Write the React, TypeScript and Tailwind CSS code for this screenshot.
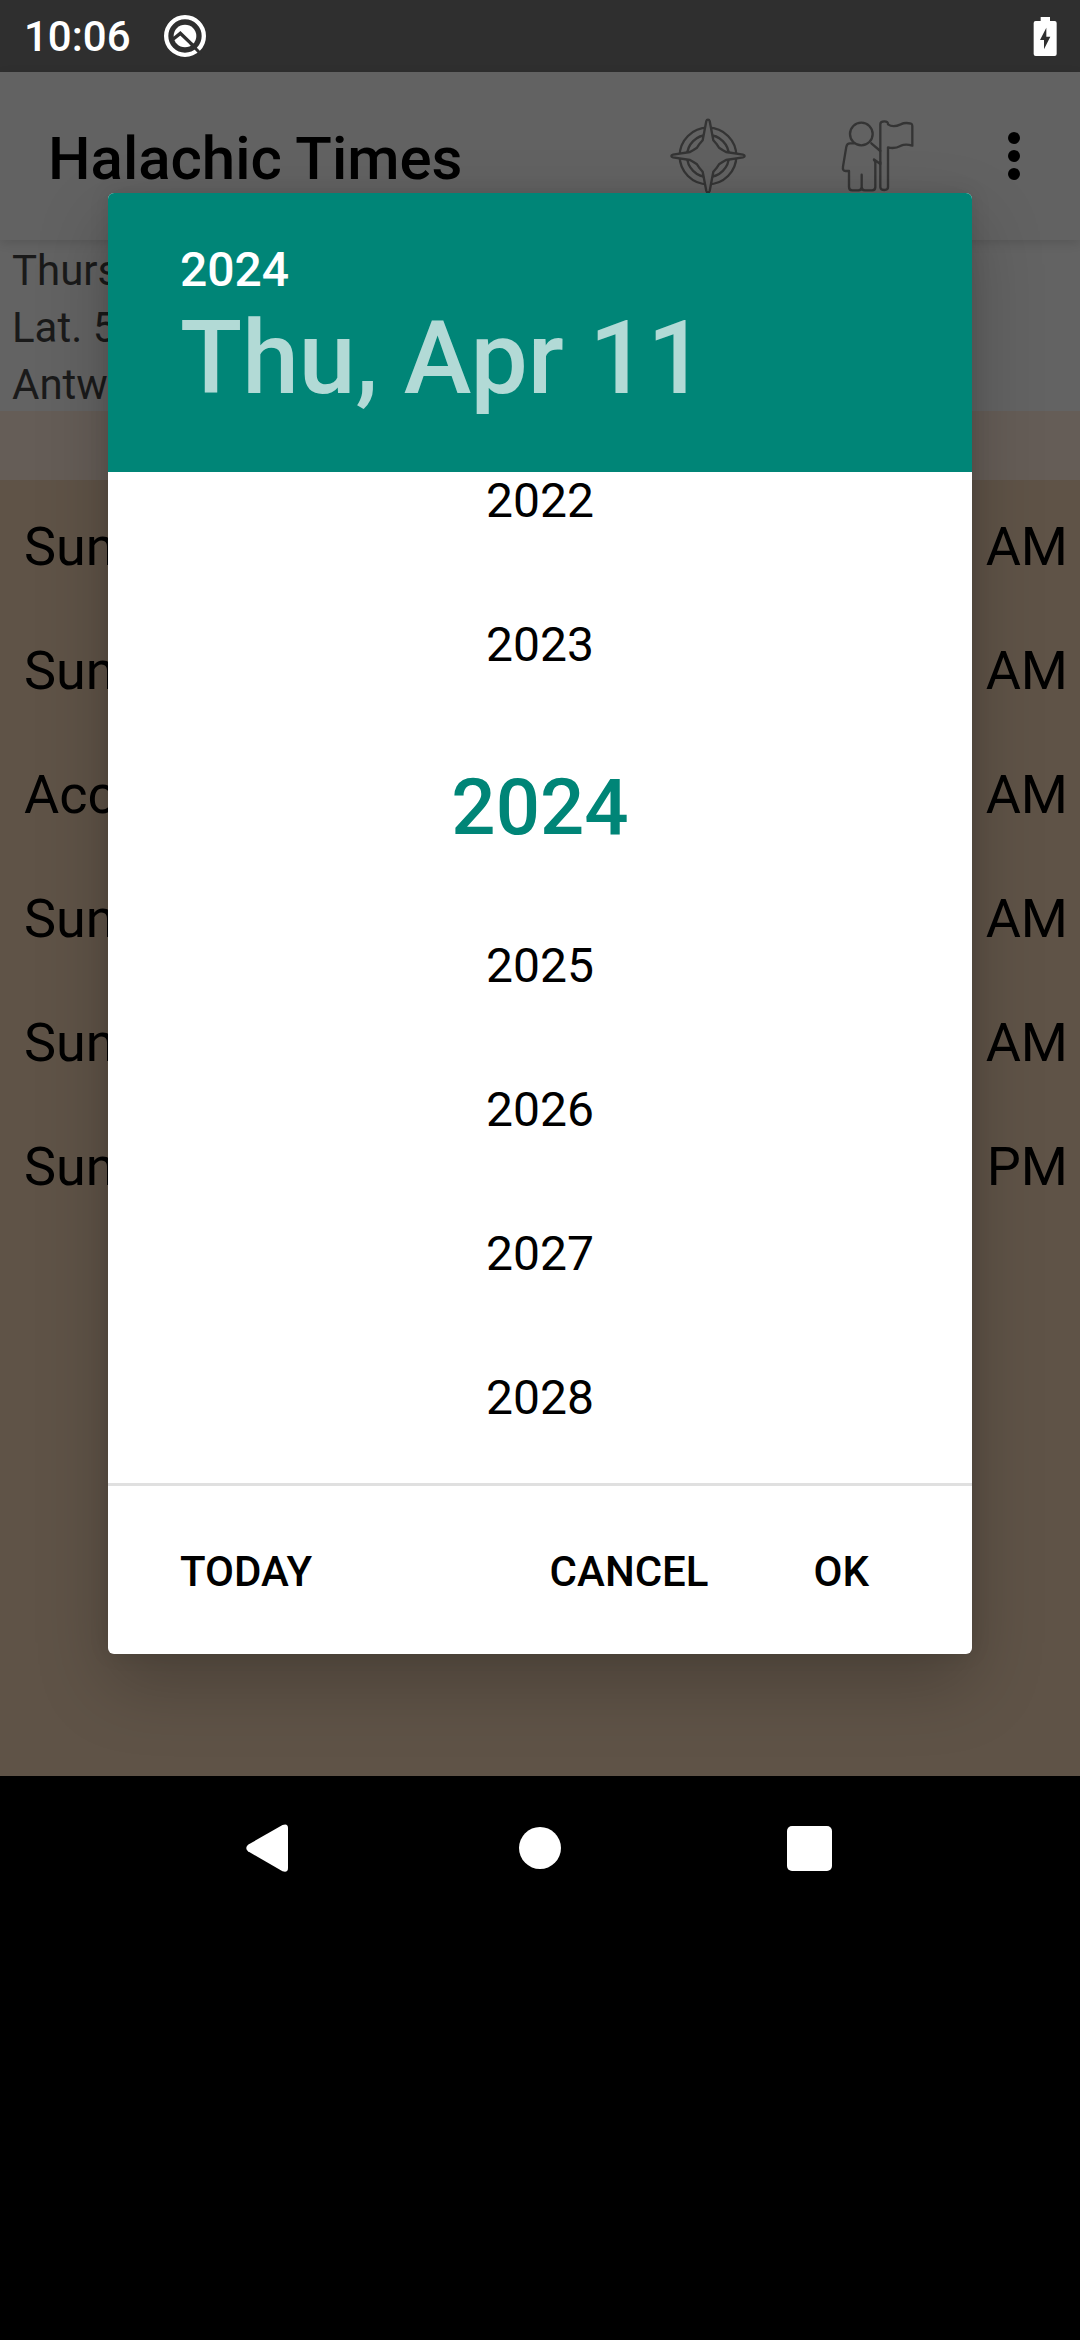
import React from "react";

const rows = [
  { label: "Sun", suffix: "AM" },
  { label: "Sun", suffix: "AM" },
  { label: "Acc", suffix: "AM" },
  { label: "Sun", suffix: "AM" },
  { label: "Sun", suffix: "AM" },
  { label: "Sun", suffix: "PM" },
];

const years = [2022, 2023, 2024, 2025, 2026, 2027, 2028];

function DebugIcon() {
  return (
    <svg className="block h-[44px] w-[44px]" viewBox="39 41 132 132" fill="none">
      <circle cx="105" cy="107" r="56.5" stroke="#fff" strokeWidth="13" />
      <circle cx="105" cy="107" r="34" fill="#fff" />
      <path d="M70 116 L91 99 L136 142" stroke="#2f2f2f" strokeWidth="10" />
      <path d="M122 129 L153 162" stroke="#2f2f2f" strokeWidth="9" />
    </svg>
  );
}

function BatteryIcon() {
  return (
    <svg className="block h-[39px] w-6" viewBox="97 48 72 117">
      <path
        d="M120 48h28v12h14q6 0 6 6v93q0 6-6 6h-57q-6 0-6-6V66q0-6 6-6h15z"
        fill="#fff"
      />
      <path d="M137 80v27h12l-19 38v-28h-12z" fill="#2f2f2f" />
    </svg>
  );
}

function CompassIcon() {
  return (
    <svg
      className="block h-[78px] w-[78px]"
      viewBox="87 172 234 234"
      fill="none"
      stroke="#343434"
      strokeWidth="7"
      strokeLinejoin="round"
    >
      <circle cx="204" cy="289" r="85" />
      <circle cx="204" cy="289" r="63" />
      <path
        d="M199 184q1-4 5-4t5 4l11 58 9 10 8 12 12 8 9 5 51 8q5 1 5 4t-5 4l-51 8-9 5-12 8-8 12-9 10-11 58q-1 4-5 4t-5-4l-11-58-9-10-8-12-12-8-9-5-51-8q-5-1-5-4t5-4l51-8 9-5 12-8 8-12 9-10z"
        fill="#606060"
      />
    </svg>
  );
}

function GuideIcon() {
  return (
    <svg
      className="block h-[72px] w-[73px]"
      viewBox="602 180 219 216"
      fill="none"
      stroke="#343434"
      strokeWidth="7"
      strokeLinejoin="round"
      strokeLinecap="round"
    >
      <circle cx="663" cy="222" r="34" />
      <path d="M641 250h-12q-9 0-11 10l-10 60q-2 13 8 13h10v48q0 10 10 10h18q10 0 10-10v-37 37q0 10 10 10h21q10 0 10-10v-73q0-5-4-8v-2l19 14v-39l-27-23" />
      <path d="M720 272v-80q0-8 12-8t11 9c10 7 25 6 38 0 12-6 20-5 31-2q4 1 4 7v59c-14-4-22-5-34 0-13 7-26 9-39 5v120q0 8-11 8t-12-8v-75" />
    </svg>
  );
}

function StatusBar() {
  return (
    <div className="flex h-[72px] items-center bg-[#2f2f2f] pl-6 pr-[23px] text-white">
      <span className="pt-[2px] text-[42px] font-medium leading-[50px]">10:06</span>
      <div className="ml-auto flex w-[894px] items-center justify-between">
        <DebugIcon />
        <BatteryIcon />
      </div>
    </div>
  );
}

function Toolbar() {
  return (
    <div className="relative flex h-[168px] items-center bg-[#626262] pl-12 shadow-[0_3px_10px_rgba(0,0,0,0.12)]">
      <h1 className="pt-[5px] text-[60px] font-medium leading-[70px] text-black">Halachic Times</h1>
      <div className="ml-auto flex w-[411px] items-center">
        <CompassIcon />
        <div className="ml-[94px]">
          <GuideIcon />
        </div>
        <div className="ml-[94px] flex flex-col gap-[6px]">
          <span className="h-3 w-3 rounded-full bg-black" />
          <span className="h-3 w-3 rounded-full bg-black" />
          <span className="h-3 w-3 rounded-full bg-black" />
        </div>
      </div>
    </div>
  );
}

function YearList() {
  return (
    <div className="h-[1011px] overflow-hidden bg-white">
      <ul className="-mt-[43px] flex flex-col text-center">
        {years.map((y) =>
          y === 2024 ? (
            <li key={y} className="h-[177px] text-[78px] font-medium leading-[181px] text-[#008577]">
              {y}
            </li>
          ) : (
            <li key={y} className="h-[144px] text-[48px] leading-[144px] text-black">
              {y}
            </li>
          ),
        )}
      </ul>
    </div>
  );
}

function DatePickerDialog() {
  return (
    <div className="absolute left-[108px] top-[193px] flex h-[1461px] w-[864px] flex-col overflow-hidden rounded-[6px] bg-white shadow-[0_30px_72px_rgba(0,0,0,0.22),0_0_20px_rgba(0,0,0,0.1)]">
      <div className="h-[279px] bg-[#008577] px-[72px] pt-[49px]">
        <div className="text-[48px] font-medium leading-[56px] text-white">2024</div>
        <div className="text-[102px] font-medium leading-[120px] text-[#b2dad6]">Thu, Apr 11</div>
      </div>
      <YearList />
      <div className="h-[3px] bg-[#e0e0e0]" />
      <div className="flex flex-1 items-center pl-[72px] pr-[103px] pt-[4px] text-[42px] font-medium leading-[50px] text-black">
        <button>TODAY</button>
        <button className="ml-auto">CANCEL</button>
        <button className="ml-[105px]">OK</button>
      </div>
    </div>
  );
}

function NavigationBar() {
  return (
    <div className="flex h-[144px] items-center bg-black">
      <svg className="ml-[246px] h-12 w-[42px]" viewBox="0 0 42 48">
        <path d="M36.500 1 2 20.700Q-1.500 24 2 27.300L36.500 47.300Q42 49 42 44V4Q42 -1 36.500 1z" fill="#fff" />
      </svg>
      <div className="ml-[231px] h-[42px] w-[42px] rounded-full bg-white" />
      <div className="ml-[226px] h-[45px] w-[45px] rounded-[5px] bg-white" />
    </div>
  );
}

export default function App() {
  return (
    <div className="relative h-[2340px] w-[1080px] overflow-hidden bg-black font-['Roboto',sans-serif]">
      <StatusBar />
      <Toolbar />
      <div className="h-[171px] bg-[#636363] pl-3 pt-[2px] text-[42px] leading-[57px] text-[#1a1a1a]">
        <div>Thurs</div>
        <div>Lat. 5</div>
        <div>Antw</div>
      </div>
      <div className="h-[69px] bg-[#655d57]" />
      <div className="h-[1296px] bg-[#5f5347] pl-6 pr-3 pt-[4px] text-[54px] text-black">
        {rows.map((r, i) => (
          <div key={i} className="flex h-[124px] items-center justify-between">
            <span>{r.label}</span>
            <span>{r.suffix}</span>
          </div>
        ))}
      </div>
      <NavigationBar />
      <DatePickerDialog />
    </div>
  );
}
